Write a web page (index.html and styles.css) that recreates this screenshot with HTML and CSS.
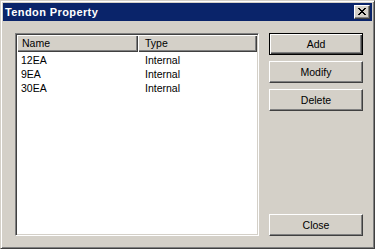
FILE: index.html
```html
<!DOCTYPE html>
<html>
<head>
<meta charset="utf-8">
<link rel="stylesheet" href="styles.css">
</head>
<body>
<div class="window">
  <div class="titlebar">
    <span class="title">Tendon Property</span>
    <div class="cap-btn">
      <svg width="14" height="12" viewBox="0 0 14 12">
        <path d="M3 2h2v1h1v1h2v-1h1v-1h2v1h-1v1h-1v1h-1v1h1v1h1v1h1v1h-2v-1h-1v-1h-2v1h-1v1h-2v-1h1v-1h1v-1h1v-1h-1v-1h-1v-1h-1z" fill="#000"/>
      </svg>
    </div>
  </div>
  <div class="content">
    <div class="listbox">
      <div class="lv-header">
        <div class="hcell hname">Name</div>
        <div class="hcell htype">Type</div>
      </div>
      <div class="rows">
        <div class="row"><span class="cname">12EA</span><span class="ctype">Internal</span></div>
        <div class="row"><span class="cname">9EA</span><span class="ctype">Internal</span></div>
        <div class="row"><span class="cname">30EA</span><span class="ctype">Internal</span></div>
      </div>
    </div>
    <div class="buttons">
      <div class="btn default">Add</div>
      <div class="btn">Modify</div>
      <div class="btn">Delete</div>
      <div class="spacer"></div>
      <div class="btn">Close</div>
    </div>
  </div>
</div>
</body>
</html>
```
FILE: styles.css
```css
* { box-sizing: border-box; }
html, body { margin: 0; padding: 0; }
body {
  width: 375px;
  height: 249px;
  background: #d4d0c8;
  font-family: "Liberation Sans", Arial, sans-serif;
  font-size: 10.5px;
  color: #000;
}
.window {
  width: 375px;
  height: 249px;
  background: #d4d0c8;
  border: 1px solid;
  border-color: #d4d0c8 #404040 #404040 #d4d0c8;
  box-shadow: inset 1px 1px #ffffff, inset -1px -1px #808080;
  padding: 2px;
  display: flex;
  flex-direction: column;
}
.titlebar {
  height: 18px;
  background: #0a246a;
  display: flex;
  align-items: center;
  padding-left: 2px;
  padding-right: 2px;
}
.title {
  flex: 1;
  color: #fff;
  font-weight: bold;
  font-size: 11px;
  letter-spacing: 0.4px;
}
.cap-btn {
  width: 16px;
  height: 14px;
  background: #d4d0c8;
  border: 1px solid;
  border-color: #ffffff #404040 #404040 #ffffff;
  box-shadow: inset -1px -1px #808080;
  display: flex;
  align-items: flex-start;
  justify-content: flex-start;
}
.cap-btn svg { display: block; }
.content {
  flex: 1;
  display: flex;
  padding: 12px 9px 10px 12px;
  gap: 10px;
}
.listbox {
  width: 244px;
  background: #fff;
  border: 1px solid;
  border-color: #808080 #ffffff #ffffff #808080;
  box-shadow: inset 1px 1px #404040, inset -1px -1px #d4d0c8;
  padding: 1px;
  display: flex;
  flex-direction: column;
}
.lv-header {
  display: flex;
  height: 17px;
}
.hcell {
  background: #d4d0c8;
  box-shadow: inset 1px 1px #ffffff, inset -1px -1px #404040, inset -2px -2px #808080;
  display: flex;
  align-items: center;
  line-height: 17px;
}
.hname { width: 121px; padding-left: 5px; }
.htype { flex: 1; padding-left: 7px; }
.rows { margin-top: 1px; }
.row {
  display: flex;
  height: 14px;
  line-height: 14px;
}
.cname { width: 121px; padding-left: 4px; }
.ctype { flex: 1; padding-left: 7px; }
.buttons {
  width: 94px;
  display: flex;
  flex-direction: column;
  gap: 6px;
}
.btn {
  height: 22px;
  background: #d4d0c8;
  border: 1px solid;
  border-color: #ffffff #404040 #404040 #ffffff;
  box-shadow: inset -1px -1px #808080;
  display: flex;
  align-items: center;
  justify-content: center;
}
.btn.default {
  border: 1px solid #000;
  box-shadow: inset 1px 1px #ffffff, inset -1px -1px #404040, inset -2px -2px #808080;
}
.spacer { flex: 1; }
```
